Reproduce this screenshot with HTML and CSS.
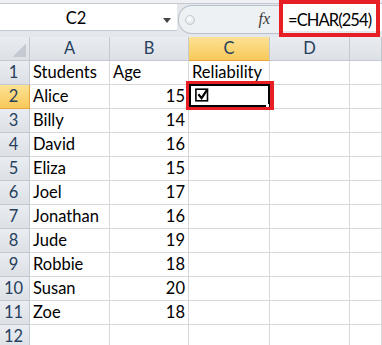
FILE: index.html
```html
<!DOCTYPE html>
<html lang="en">
  <head>
    <meta charset="UTF-8" />
    <title>CHAR(254) checkbox</title>
    <link rel="stylesheet" href="styles.css">
  </head>
  <body>
    <div class="top">
      <div class="namebox">
        <span class="nb-text">C2</span>
        <span class="nb-arrow"></span>
      </div>
      <div class="tools">
        <div class="pill">
          <span class="grip"></span>
          <span class="fx">fx</span>
        </div>
      </div>
      <div class="formula">=CHAR(254)</div>
    </div>

    <div class="sheet">
      <div class="corner"><span class="tri"></span></div>
      <div class="ch">A</div><div class="ch">B</div><div class="ch on">C</div><div class="ch">D</div><div class="ch"></div>

      <div class="rh">1</div><div class="cell">Students</div><div class="cell">Age</div><div class="cell">Reliability</div><div class="cell"></div><div class="cell"></div>
      <div class="rh on">2</div><div class="cell">Alice</div><div class="cell num">15</div>
      <div class="cell sel">
        <svg class="check" width="14" height="14" viewBox="0 0 14 14">
          <rect x="0.9" y="1.2" width="11.6" height="11.6" fill="none" stroke="#000" stroke-width="1.6"/>
          <path d="M3.4 6.2 L6.6 10.2 L12.4 1.4" fill="none" stroke="#000" stroke-width="2.2"/>
        </svg>
        <span class="handle"></span>
      </div>
      <div class="cell"></div><div class="cell"></div>
      <div class="rh">3</div><div class="cell">Billy</div><div class="cell num">14</div><div class="cell"></div><div class="cell"></div><div class="cell"></div>
      <div class="rh">4</div><div class="cell">David</div><div class="cell num">16</div><div class="cell"></div><div class="cell"></div><div class="cell"></div>
      <div class="rh">5</div><div class="cell">Eliza</div><div class="cell num">15</div><div class="cell"></div><div class="cell"></div><div class="cell"></div>
      <div class="rh">6</div><div class="cell">Joel</div><div class="cell num">17</div><div class="cell"></div><div class="cell"></div><div class="cell"></div>
      <div class="rh">7</div><div class="cell">Jonathan</div><div class="cell num">16</div><div class="cell"></div><div class="cell"></div><div class="cell"></div>
      <div class="rh">8</div><div class="cell">Jude</div><div class="cell num">19</div><div class="cell"></div><div class="cell"></div><div class="cell"></div>
      <div class="rh">9</div><div class="cell">Robbie</div><div class="cell num">18</div><div class="cell"></div><div class="cell"></div><div class="cell"></div>
      <div class="rh">10</div><div class="cell">Susan</div><div class="cell num">20</div><div class="cell"></div><div class="cell"></div><div class="cell"></div>
      <div class="rh">11</div><div class="cell">Zoe</div><div class="cell num">18</div><div class="cell"></div><div class="cell"></div><div class="cell"></div>
      <div class="rh">12</div><div class="cell"></div><div class="cell"></div><div class="cell"></div><div class="cell"></div><div class="cell"></div>
    </div>
  </body>
</html>
```

FILE: styles.css
```css
body {
  margin: 0;
  font-family: Lato, "Open Sans", sans-serif;
  font-size: 16.5px;
  background: #fff;
  overflow: hidden;
}

/* formula bar */
.top {
  display: flex;
  height: 37px;
  background: linear-gradient(#eef0f3 0 3px, #c5cad1 3px 4px, #e4e8ed 4px);
}
.namebox {
  display: flex;
  align-items: flex-start;
  width: 177px;
  height: 27px;
  margin-top: 4px;
  background: #fff;
  border-bottom: 1px solid #c5cad1;
  box-sizing: border-box;
}
.nb-text {
  width: 152px;
  text-align: center;
  line-height: 27px;
  padding-top: 1px;
  color: #000;
}
.nb-arrow {
  margin: 14px 0 0 11px;
  border-top: 5px solid #444;
  border-left: 4px solid transparent;
  border-right: 4px solid transparent;
}
.tools {
  display: flex;
  width: 102px;
}
.pill {
  flex: 1;
  display: flex;
  align-items: center;
  height: 27px;
  margin: 5px 0 0 1px;
  border: 1px solid #b9c0ca;
  border-right: none;
  border-radius: 14px 0 0 14px;
  background: #eef1f4;
}
.grip {
  width: 8px;
  height: 8px;
  margin-left: 6px;
  border: 1px solid #c4cad2;
  border-radius: 50%;
  background: radial-gradient(circle at 40% 35%, #fff, #d5dae0);
}
.fx {
  margin-left: auto;
  margin-right: 9px;
  margin-top: -2px;
  font-family: "Liberation Serif", serif;
  font-style: italic;
  font-size: 16px;
  color: #3a3a3a;
}
.formula {
  position: relative;
  flex: 1;
  height: 24px;
  margin-top: 4px;
  padding: 3px 0 0 9px;
  line-height: 27px;
  letter-spacing: -0.9px;
  background: #fff;
  color: #000;
  white-space: nowrap;
}
.formula::after {
  content: "";
  position: absolute;
  left: 0;
  top: -4px;
  right: 2px;
  height: 37px;
  border: 4px solid #e81e25;
  box-sizing: border-box;
}

/* grid */
.sheet {
  display: grid;
  grid-template-columns: 30px 80px 79px 81px 80px 1fr;
  grid-auto-rows: 24px;
}
.cell {
  border-right: 1px solid #d8d8d8;
  border-bottom: 1px solid #d8d8d8;
  line-height: 23px;
  padding: 0 3px;
  white-space: nowrap;
  color: #000;
}
.num {
  text-align: right;
}
.corner,
.ch,
.rh {
  background: linear-gradient(#e9ecf0, #dde1e6);
  color: #27405e;
  text-align: center;
  line-height: 23px;
  border-right: 1px solid #c3c9d1;
  border-bottom: 1px solid #c3c9d1;
}
.rh {
  padding-right: 2px;
}
.on {
  background: linear-gradient(#fde294, #f8c95a);
  border-bottom-color: #e8a43c;
}
.rh.on {
  border-right-color: #e8a43c;
}
.corner {
  display: flex;
  justify-content: flex-end;
  align-items: flex-end;
  padding: 0 3px 3px 0;
}
.tri {
  width: 13px;
  height: 13px;
  background: linear-gradient(to bottom right, transparent 50%, #c4cad2 50%);
}

/* selected cell with annotation */
.sel {
  position: relative;
  padding: 3px 0 0 6px;
}
.check {
  display: block;
}
.sel::before {
  content: "";
  position: absolute;
  top: -1px;
  left: 0;
  right: -1px;
  bottom: 1px;
  border: 2px solid #000;
}
.sel::after {
  content: "";
  position: absolute;
  top: -4px;
  left: -3px;
  right: -5px;
  bottom: -2px;
  border: 3px solid #e81e25;
  border-right-width: 4px;
}
.handle {
  position: absolute;
  right: 0;
  bottom: 1px;
  width: 3px;
  height: 3px;
  background: #fff;
  z-index: 1;
}
```
